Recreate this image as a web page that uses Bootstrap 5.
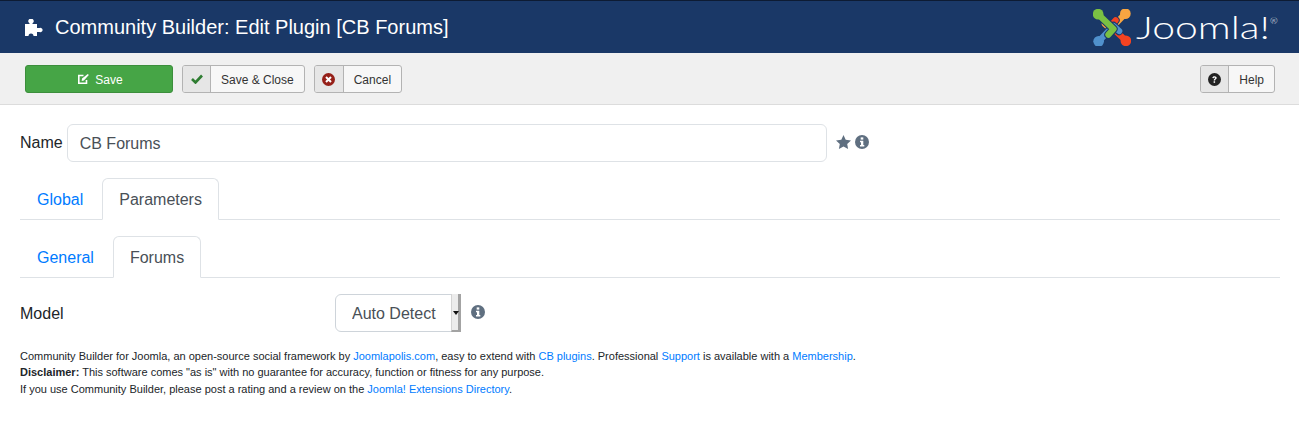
<!DOCTYPE html>
<html lang="en">
<head>
<meta charset="utf-8">
<title>Community Builder: Edit Plugin</title>
<link href="https://cdn.jsdelivr.net/npm/bootstrap@5.3.0/dist/css/bootstrap.min.css" rel="stylesheet">
<style>
body{font-family:"Liberation Sans",Arial,sans-serif;font-size:16px;color:#212529;background:#fff;}
.hdr{height:53px;background:#1a3867;border-top:1px solid #0d1b33;padding:0 24px 0 25px;}
.hdr-title{font-size:20px;font-weight:400;color:#fff;margin:0;line-height:24px;}
.hdr-ico{width:19px;height:17px;margin-right:11px;fill:#fff;}
.jlogo{gap:5px;}
.jword{display:inline-block;width:139px;white-space:nowrap;font-family:Lato,"Liberation Sans",sans-serif;font-weight:300;font-size:31px;line-height:36px;color:#fff;transform:scaleX(1.32);transform-origin:left center;}
.jword sup{font-size:7px;top:-15px;position:relative;vertical-align:baseline;}
.tbar{height:52px;background:#f0f0f0;border-bottom:1px solid #dcdcdc;padding:12px 24px 0 25px;}
.tb-btn{height:28px;font-size:12px;line-height:26px;border:1px solid #b3b3b3;border-radius:3px;background:#f7f7f7;color:#333;padding:0;display:inline-flex;align-items:stretch;}
.tb-ico{width:28px;background:#e6e6e6;border-right:1px solid #b3b3b3;display:flex;align-items:center;justify-content:center;border-radius:2px 0 0 2px;}
.tb-ico-w{width:29px;}
.tb-txt{padding:1px 10px 0;}
.tb-save{width:148px;background:#46a546;border-color:#3c8e3c;color:#fff;justify-content:center;align-items:center;gap:5px;padding-left:2px;}
.tb-save:hover{background:#46a546;}
.sv-txt{padding-top:1px;}
.g-8{gap:9px;}
.main{padding:19px 19px 0 20px;}
.nm-lbl{margin:0 4px 0 0;line-height:24px;}
.nm-inp{width:760px;height:38px;font-size:16px;color:#495057;padding:7px 12px 5px;}
.side-star{fill:#5f6f80;margin:0 4px 2px 9px;}
.side-info{margin-bottom:2px;}
.tabs-a{margin-top:16px;}
.tabs-b{margin-top:16px;}
.tabs-a,.tabs-b{--bs-nav-link-color:#007bff;--bs-nav-link-hover-color:#007bff;--bs-nav-tabs-border-color:#dee2e6;--bs-nav-tabs-link-active-color:#495057;--bs-nav-tabs-link-active-border-color:#dee2e6 #dee2e6 #fff;}
.tabs-a .nav-link,.tabs-b .nav-link{padding:9px 16px 7px;line-height:24px;}
.tabs-a .nav-item:first-child,.tabs-b .nav-item:first-child{margin-right:2px;}
.mdl-row{margin-top:16px;}
.mdl-lbl{width:315px;margin:0;padding-top:2px;}
.sel-wrap{width:126px;height:38px;}
.mdl-sel{width:126px;height:38px;font-size:16px;color:#495057;padding:7px 12px 5px 16px;background-image:none;border-color:#ced4da;}
.sel-strip{position:absolute;right:0;top:0;bottom:0;width:10px;background:#ececec;border-right:3px solid #a3a3a3;border-bottom:2px solid #a3a3a3;border-left:1px solid #d4d4d4;pointer-events:none;display:flex;align-items:center;justify-content:center;}
.sel-tri{width:0;height:0;flex:none;margin:2px -1px 0 0;border-left:3.500px solid transparent;border-right:3.500px solid transparent;border-top:4px solid #111;}
.info-b{margin:0 0 2px 10px;}
.foot{margin-top:15.6px;font-size:11px;line-height:16.5px;color:#212529;}
.foot a{color:#007bff;text-decoration:none;}
</style>
</head>
<body>
<header class="hdr d-flex align-items-center justify-content-between">
  <div class="d-flex align-items-center">
    <svg class="hdr-ico" viewBox="0 0 19 17"><path d="M0 5H4.500V4.200A2.600 2.600 0 1 1 7.500 4.200V5H12V9H14.500A2.200 2.200 0 1 1 14.500 13H12V17H8.500A2.500 2.500 0 0 0 3.500 17H0Z"/></svg>
    <h1 class="hdr-title">Community Builder: Edit Plugin [CB Forums]</h1>
  </div>
  <div class="jlogo d-flex align-items-center">
    <svg width="38" height="37" viewBox="0 0 37 36" fill="none" stroke-linecap="round" stroke-linejoin="round">
      <defs>
        <g id="jpiece-shadow"><path d="M6 6L20 19.500L15 25" stroke="#1a3867" stroke-width="8"/></g>
      </defs>
      <g transform="rotate(90 18.500 18)"><use href="#jpiece-shadow"/><path d="M6 6L20 19.500L15 25" stroke="#f9a541" stroke-width="6"/><circle cx="5" cy="5" r="5.200" fill="#f9a541"/></g>
      <g transform="rotate(180 18.500 18)"><use href="#jpiece-shadow"/><path d="M6 6L20 19.500L15 25" stroke="#f44321" stroke-width="6"/><circle cx="5" cy="5" r="5.200" fill="#f44321"/></g>
      <g transform="rotate(270 18.500 18)"><use href="#jpiece-shadow"/><path d="M6 6L20 19.500L15 25" stroke="#5091cd" stroke-width="6"/><circle cx="5" cy="5" r="5.200" fill="#5091cd"/></g>
      <g><use href="#jpiece-shadow"/><path d="M6 6L20 19.500L15 25" stroke="#7ac143" stroke-width="6"/><circle cx="5" cy="5" r="5.200" fill="#7ac143"/></g>
    </svg>
    <span class="jword">Joomla!<sup>®</sup></span>
  </div>
</header>
<div class="tbar d-flex justify-content-between">
  <div class="d-flex g-8">
    <button type="button" class="btn tb-btn tb-save">
      <svg width="13" height="12" viewBox="0 0 12 12" fill="none" stroke="#fff" stroke-width="1.600"><path d="M9 7v3.200H1.300V2.500H6"/><path d="M4.500 5.500L10.300 .9l1 1-4.900 5.500-2.200.5z" fill="#fff" stroke="none"/></svg>
      <span class="sv-txt">Save</span>
    </button>
    <button type="button" class="btn tb-btn"><span class="tb-ico"><svg width="12" height="10" viewBox="0 0 12 10" fill="none" stroke="#2f7d32" stroke-width="2.600"><path d="M1 5l3.500 3.500L11 1.500"/></svg></span><span class="tb-txt">Save &amp; Close</span></button>
    <button type="button" class="btn tb-btn"><span class="tb-ico tb-ico-w"><svg width="13" height="13" viewBox="0 0 13 13"><circle cx="6.500" cy="6.500" r="6.500" fill="#962019"/><path d="M4 4l5 5M9 4l-5 5" stroke="#fff" stroke-width="2"/></svg></span><span class="tb-txt">Cancel</span></button>
  </div>
  <button type="button" class="btn tb-btn"><span class="tb-ico"><svg width="13" height="13" viewBox="0 0 13 13"><circle cx="6.500" cy="6.500" r="6.500" fill="#222"/><path d="M4.300 5c.2-1.300 1-1.800 2.200-1.800s2.200.7 2.200 1.800c0 1.400-1.600 1.300-1.600 2.400H5.700c0-1.700 1.500-1.600 1.500-2.400 0-.4-.3-.6-.7-.6-.5 0-.7.3-.9.800z" fill="#fff"/><rect x="5.600" y="8.300" width="1.500" height="1.500" fill="#fff"/></svg></span><span class="tb-txt">Help</span></button>
</div>
<main class="main">
  <div class="d-flex align-items-center">
    <label class="nm-lbl" for="pname">Name</label>
    <input id="pname" class="form-control nm-inp" value="CB Forums">
    <svg class="side-star" width="15" height="14" viewBox="0 0 15 14"><path d="M7.500 0l2.200 4.700 5.300.7-3.800 3.600.9 5-4.600-2.400L2.900 14l.9-5L0 5.400l5.300-.7z"/></svg>
    <svg class="side-info" width="14" height="14" viewBox="0 0 14 14"><circle cx="7" cy="7" r="7" fill="#5f6f80"/><rect x="5.700" y="2.400" width="2.600" height="2.200" fill="#fff"/><path d="M5 5.800h3.300v4.300h1v1.400H5v-1.400h1V7.200H5z" fill="#fff"/></svg>
  </div>
  <ul class="nav nav-tabs tabs-a">
    <li class="nav-item"><a class="nav-link" href="#">Global</a></li>
    <li class="nav-item"><a class="nav-link active" href="#">Parameters</a></li>
  </ul>
  <ul class="nav nav-tabs tabs-b">
    <li class="nav-item"><a class="nav-link" href="#">General</a></li>
    <li class="nav-item"><a class="nav-link active" href="#">Forums</a></li>
  </ul>
  <div class="mdl-row d-flex align-items-center">
    <label class="mdl-lbl" for="mdl">Model</label>
    <div class="sel-wrap position-relative">
      <select id="mdl" class="form-select mdl-sel"><option>Auto Detect</option></select>
      <span class="sel-strip"><span class="sel-tri"></span></span>
    </div>
    <svg class="info-b" width="14" height="14" viewBox="0 0 14 14"><circle cx="7" cy="7" r="7" fill="#5f6f80"/><rect x="5.700" y="2.400" width="2.600" height="2.200" fill="#fff"/><path d="M5 5.800h3.300v4.300h1v1.400H5v-1.400h1V7.200H5z" fill="#fff"/></svg>
  </div>
  <div class="foot">
    Community Builder for Joomla, an open-source social framework by <a href="#">Joomlapolis.com</a>, easy to extend with <a href="#">CB plugins</a>. Professional <a href="#">Support</a> is available with a <a href="#">Membership</a>.<br>
    <strong>Disclaimer:</strong> This software comes "as is" with no guarantee for accuracy, function or fitness for any purpose.<br>
    If you use Community Builder, please post a rating and a review on the <a href="#">Joomla! Extensions Directory</a>.
  </div>
</main>
<script src="https://cdn.jsdelivr.net/npm/bootstrap@5.3.0/dist/js/bootstrap.bundle.min.js"></script>
</body>
</html>
